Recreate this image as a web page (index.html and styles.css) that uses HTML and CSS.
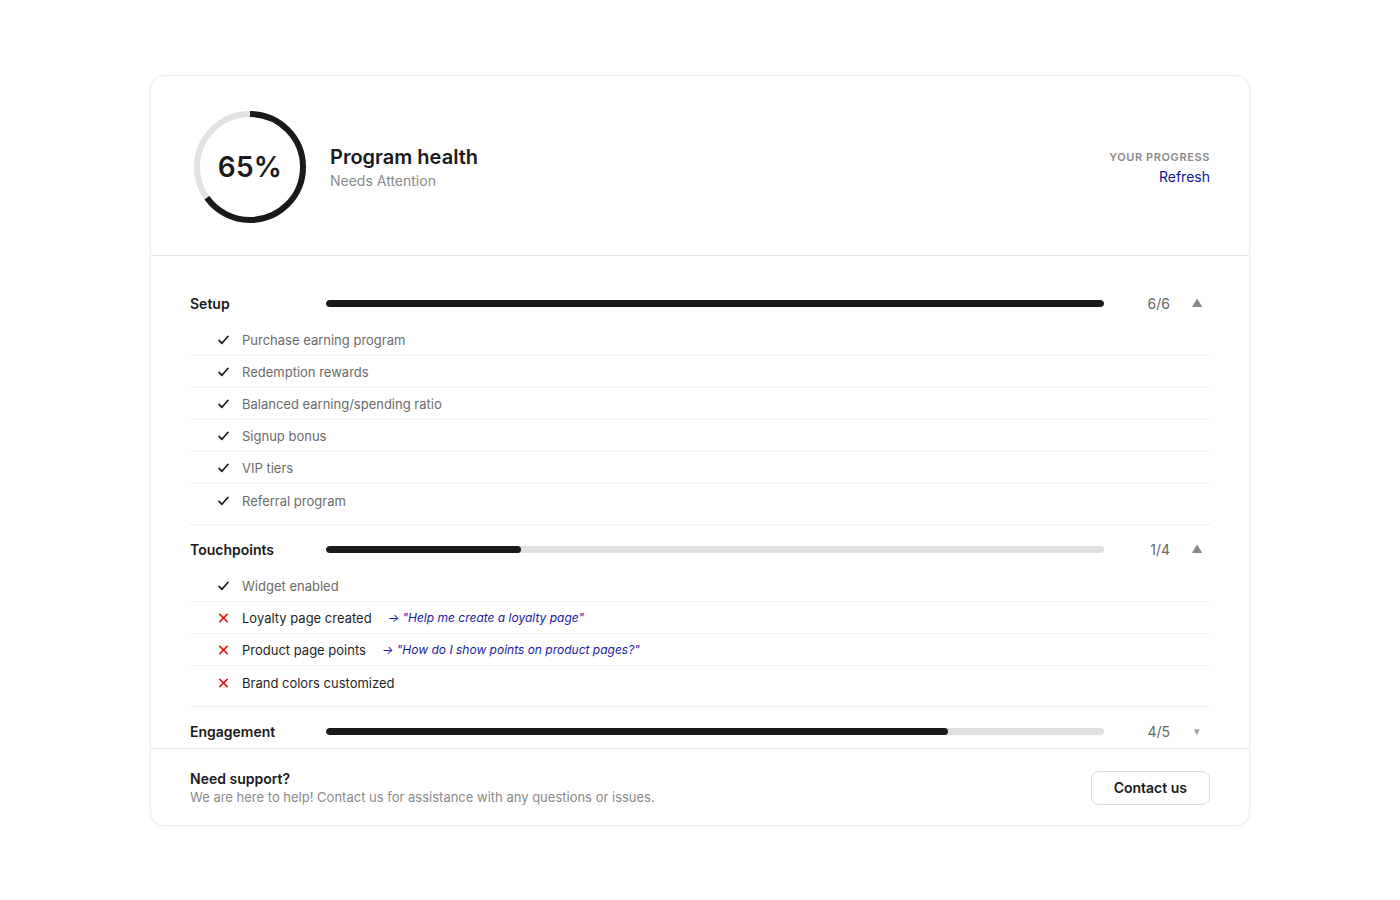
FILE: index.html
```html
<!DOCTYPE html>
<html lang="en">
<head>
<meta charset="utf-8">
<title>Program health</title>
<link rel="stylesheet" href="styles.css">
</head>
<body>
<div class="card">
  <header class="head">
    <div class="ring">
      <svg width="120" height="120" viewBox="0 0 120 120">
        <circle cx="60" cy="60" r="53" fill="none" stroke="#e2e2e2" stroke-width="6"/>
        <circle cx="60" cy="60" r="53" fill="none" stroke="#1a1a1a" stroke-width="6" stroke-dasharray="216.5 400" transform="rotate(-90 60 60)"/>
      </svg>
      <span class="ring-val">65%</span>
    </div>
    <div class="head-text">
      <div class="title">Program health</div>
      <div class="subtitle">Needs Attention</div>
    </div>
    <div class="head-right">
      <div class="eyebrow">YOUR PROGRESS</div>
      <a class="refresh" href="#">Refresh</a>
    </div>
  </header>

  <div class="scroll">
    <section class="sec">
      <div class="sec-head">
        <span class="sec-name">Setup</span>
        <div class="bar"><div class="fill" style="width:100%"></div></div>
        <span class="count">6/6</span>
        <span class="caret">▲</span>
      </div>
      <ul class="items">
        <li class="item done"><svg class="ic" viewBox="0 0 12 10"><path d="M1.2 5.4 L4.3 8.6 L10.8 1.2"/></svg><span>Purchase earning program</span></li>
        <li class="item done"><svg class="ic" viewBox="0 0 12 10"><path d="M1.2 5.4 L4.3 8.6 L10.8 1.2"/></svg><span>Redemption rewards</span></li>
        <li class="item done"><svg class="ic" viewBox="0 0 12 10"><path d="M1.2 5.4 L4.3 8.6 L10.8 1.2"/></svg><span>Balanced earning/spending ratio</span></li>
        <li class="item done"><svg class="ic" viewBox="0 0 12 10"><path d="M1.2 5.4 L4.3 8.6 L10.8 1.2"/></svg><span>Signup bonus</span></li>
        <li class="item done"><svg class="ic" viewBox="0 0 12 10"><path d="M1.2 5.4 L4.3 8.6 L10.8 1.2"/></svg><span>VIP tiers</span></li>
        <li class="item done"><svg class="ic" viewBox="0 0 12 10"><path d="M1.2 5.4 L4.3 8.6 L10.8 1.2"/></svg><span>Referral program</span></li>
      </ul>
    </section>
    <section class="sec">
      <div class="sec-head">
        <span class="sec-name">Touchpoints</span>
        <div class="bar"><div class="fill" style="width:25%"></div></div>
        <span class="count">1/4</span>
        <span class="caret">▲</span>
      </div>
      <ul class="items">
        <li class="item done"><svg class="ic" viewBox="0 0 12 10"><path d="M1.2 5.4 L4.3 8.6 L10.8 1.2"/></svg><span>Widget enabled</span></li>
        <li class="item todo"><svg class="ic x" viewBox="0 0 12 10"><path d="M1.5 0.5 L10.5 9.5 M10.5 0.5 L1.5 9.5"/></svg><span>Loyalty page created</span><a class="hint" href="#">→ "Help me create a loyalty page"</a></li>
        <li class="item todo"><svg class="ic x" viewBox="0 0 12 10"><path d="M1.5 0.5 L10.5 9.5 M10.5 0.5 L1.5 9.5"/></svg><span>Product page points</span><a class="hint" href="#">→ "How do I show points on product pages?"</a></li>
        <li class="item todo"><svg class="ic x" viewBox="0 0 12 10"><path d="M1.5 0.5 L10.5 9.5 M10.5 0.5 L1.5 9.5"/></svg><span>Brand colors customized</span></li>
      </ul>
    </section>
    <section class="sec">
      <div class="sec-head">
        <span class="sec-name">Engagement</span>
        <div class="bar"><div class="fill" style="width:80%"></div></div>
        <span class="count">4/5</span>
        <span class="caret small">▾</span>
      </div>
    </section>
  </div>

  <footer class="foot">
    <div class="foot-text">
      <div class="foot-title">Need support?</div>
      <div class="foot-desc">We are here to help! Contact us for assistance with any questions or issues.</div>
    </div>
    <button class="btn">Contact us</button>
  </footer>
</div>
</body>
</html>
```

FILE: styles.css
```css
* { box-sizing: border-box; }
html, body { margin: 0; background: #fff; }
body {
  padding: 75px 150px;
  font-family: Inter, "Noto Sans", sans-serif;
  color: #1a1a1a;
}
.card {
  width: 1100px;
  height: 751px;
  border: 1px solid #ececec;
  border-radius: 14px;
  box-shadow: 0 1px 4px rgba(0,0,0,0.04);
  display: flex;
  flex-direction: column;
  overflow: hidden;
  background: #fff;
}
.head {
  display: flex;
  align-items: center;
  padding: 31px 39px 28px 39px;
  border-bottom: 1px solid #e4e4e4;
}
.ring {
  position: relative;
  width: 120px;
  height: 120px;
  flex: none;
}
.ring svg { display: block; }
.ring-val {
  position: absolute;
  inset: 0;
  display: flex;
  align-items: center;
  justify-content: center;
  font-size: 28px;
  font-weight: 600;
  letter-spacing: 0.3px;
  color: #1a1a1a;
}
.head-text { margin-left: 20px; flex: 1; padding-top: 1px; }
.title { font-size: 20px; font-weight: 600; line-height: 26px; color: #1a1a1a; }
.subtitle { font-size: 14px; line-height: 20px; color: #8a8a8a; margin-top: 1px; }
.head-right { text-align: right; padding-top: 1px; }
.eyebrow {
  font-size: 11px;
  font-weight: 600;
  letter-spacing: 0.6px;
  color: #8a8a8a;
  line-height: 14px;
}
.refresh {
  display: inline-block;
  margin-top: 4px;
  font-size: 14px;
  line-height: 18px;
  color: #10109a;
  text-decoration: none;
}
.scroll {
  height: 493px;
  overflow: hidden;
  padding: 23px 39px 0;
  border-bottom: 1px solid #e4e4e4;
}
.sec {
  padding: 14px 0 7px;
  border-bottom: 1px solid #ececec;
}
.sec-head {
  display: flex;
  align-items: center;
  height: 20px;
}
.sec-name {
  width: 136px;
  flex: none;
  font-size: 14px;
  font-weight: 600;
  color: #1a1a1a;
}
.bar {
  flex: 1;
  height: 7px;
  border-radius: 4px;
  background: #e0e0e0;
  overflow: hidden;
}
.fill { height: 100%; background: #1a1a1a; border-radius: 4px; }
.count {
  width: 66px;
  flex: none;
  text-align: right;
  font-size: 14px;
  color: #666;
}
.caret {
  width: 26px;
  margin-left: 14px;
  flex: none;
  text-align: center;
  font-size: 11px;
  color: #888;
}
.caret.small { font-size: 11px; color: #999; }
.items {
  list-style: none;
  margin: 11px 0 0;
  padding: 0;
}
.item {
  display: flex;
  align-items: center;
  height: 32px;
  padding-left: 28px;
  border-bottom: 1px solid #f0f0f0;
  font-size: 13px;
}
.item:last-child { border-bottom: none; height: 33px; }
.item.done { color: #6b6b6b; }
.item.todo { color: #1f1f1f; }
.ic {
  width: 11px;
  height: 10px;
  margin-right: 13px;
  flex: none;
  fill: none;
  stroke: #1a1a1a;
  stroke-width: 1.9;
  stroke-linecap: round;
  stroke-linejoin: round;
}
.ic.x { stroke: #e01010; stroke-width: 1.6; stroke-linecap: butt; }
.hint {
  margin-left: 16px;
  font-size: 12px;
  font-style: italic;
  color: #1a1aa0;
  text-decoration: none;
}
.foot {
  flex: 1;
  display: flex;
  align-items: center;
  justify-content: space-between;
  padding: 1px 39px 0;
}
.foot-title { font-size: 14px; font-weight: 600; line-height: 18px; color: #1a1a1a; }
.foot-desc { font-size: 13px; line-height: 18px; color: #8a8a8a; }
.btn {
  height: 34px;
  padding: 0 22px;
  border: 1px solid #dcdcdc;
  border-radius: 8px;
  background: #fff;
  font-family: Inter, "Noto Sans", sans-serif;
  font-size: 14px;
  font-weight: 600;
  color: #1a1a1a;
}
```
